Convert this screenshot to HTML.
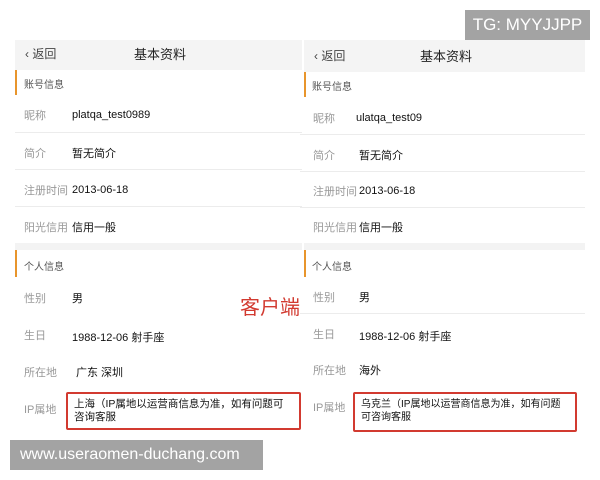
<!DOCTYPE html>
<html><head><meta charset="utf-8"><style>
*{margin:0;padding:0;box-sizing:border-box}
body{width:600px;height:480px;background:#fff;position:relative;overflow:hidden;font-family:"Liberation Sans","Noto Sans CJK SC",sans-serif}
.a{position:absolute;white-space:nowrap}
.hd{position:absolute;background:#f4f4f4}
.lb{color:#999;font-size:11px}
.v{color:#111;font-size:11px}
.n{margin-top:2px}
.sec{position:absolute;font-size:10px;color:#555}
.bar{position:absolute;width:2px;background:#e8952c}
.ln{position:absolute;height:1px;background:#ececec}
.band{position:absolute;height:7px;background:#f3f3f3}
.box{position:absolute;border:2px solid #d23a30;border-radius:2px;font-size:11px;color:#111;line-height:13px;padding:4px 0 0 6px;white-space:nowrap;overflow:hidden}
</style></head><body>
<!-- left -->
<div class="hd" style="left:15px;top:40px;width:287px;height:30px"></div>
<div class="a" style="left:25px;top:45px;font-size:12px;color:#444">&lsaquo; 返回</div>
<div class="a" style="left:134px;top:44px;font-size:13px;color:#222">基本资料</div>
<div class="bar" style="left:15px;top:70px;height:25px"></div>
<div class="sec" style="left:24px;top:76px">账号信息</div>
<div class="a lb" style="left:24px;top:107px">昵称</div><div class="a v n" style="left:72px;top:107px">platqa_test0989</div>
<div class="ln" style="left:15px;top:132px;width:287px"></div>
<div class="a lb" style="left:24px;top:145px">简介</div><div class="a v" style="left:72px;top:145px">暂无简介</div>
<div class="ln" style="left:15px;top:169px;width:287px"></div>
<div class="a lb" style="left:24px;top:182px">注册时间</div><div class="a v n" style="left:72px;top:182px">2013-06-18</div>
<div class="ln" style="left:15px;top:206px;width:287px"></div>
<div class="a lb" style="left:24px;top:219px">阳光信用</div><div class="a v" style="left:72px;top:219px">信用一般</div>
<div class="band" style="left:15px;top:243px;width:287px"></div>
<div class="bar" style="left:15px;top:250px;height:27px"></div>
<div class="sec" style="left:24px;top:258px">个人信息</div>
<div class="a lb" style="left:24px;top:290px">性别</div><div class="a v" style="left:72px;top:290px">男</div>
<div class="a lb" style="left:24px;top:327px">生日</div><div class="a v n" style="left:72px;top:327px">1988-12-06 射手座</div>
<div class="a lb" style="left:24px;top:364px">所在地</div><div class="a v" style="left:76px;top:364px">广东 深圳</div>
<div class="a lb" style="left:24px;top:401px">IP属地</div>
<div class="box" style="left:66px;top:392px;width:235px;height:38px;font-size:10.5px">上海（IP属地以运营商信息为准，如有问题可<br>咨询客服</div>
<div class="a" style="left:240px;top:291px;font-size:20px;color:#d23a30">客户端</div>
<!-- right -->
<div class="hd" style="left:304px;top:40px;width:281px;height:32px"></div>
<div class="a" style="left:314px;top:47px;font-size:12px;color:#444">&lsaquo; 返回</div>
<div class="a" style="left:420px;top:46px;font-size:13px;color:#222">基本资料</div>
<div class="bar" style="left:304px;top:72px;height:25px"></div>
<div class="sec" style="left:312px;top:78px">账号信息</div>
<div class="a lb" style="left:313px;top:110px">昵称</div><div class="a v n" style="left:356px;top:110px">ulatqa_test09</div>
<div class="ln" style="left:300px;top:134px;width:285px"></div>
<div class="a lb" style="left:313px;top:147px">简介</div><div class="a v" style="left:359px;top:147px">暂无简介</div>
<div class="ln" style="left:300px;top:171px;width:285px"></div>
<div class="a lb" style="left:313px;top:183px">注册时间</div><div class="a v n" style="left:359px;top:183px">2013-06-18</div>
<div class="ln" style="left:300px;top:207px;width:285px"></div>
<div class="a lb" style="left:313px;top:219px">阳光信用</div><div class="a v" style="left:359px;top:219px">信用一般</div>
<div class="band" style="left:304px;top:243px;width:281px"></div>
<div class="bar" style="left:304px;top:250px;height:27px"></div>
<div class="sec" style="left:312px;top:258px">个人信息</div>
<div class="a lb" style="left:313px;top:289px">性别</div><div class="a v" style="left:359px;top:289px">男</div>
<div class="ln" style="left:300px;top:313px;width:285px"></div>
<div class="a lb" style="left:313px;top:326px">生日</div><div class="a v n" style="left:359px;top:326px">1988-12-06 射手座</div>
<div class="a lb" style="left:313px;top:362px">所在地</div><div class="a v" style="left:359px;top:362px">海外</div>
<div class="a lb" style="left:313px;top:399px">IP属地</div>
<div class="box" style="left:353px;top:392px;width:224px;height:40px;font-size:10px">乌克兰（IP属地以运营商信息为准，如有问题<br>可咨询客服</div>
<!-- watermarks -->
<div class="a" style="left:465px;top:10px;width:125px;height:30px;background:#a3a3a3;color:#fff;font-size:17px;line-height:30px;text-align:center">TG: MYYJJPP</div>
<div class="a" style="left:10px;top:440px;width:253px;height:30px;background:#a3a3a3;color:#fff;font-size:16px;line-height:30px;padding-left:10px">www.useraomen-duchang.com</div>
</body></html>
